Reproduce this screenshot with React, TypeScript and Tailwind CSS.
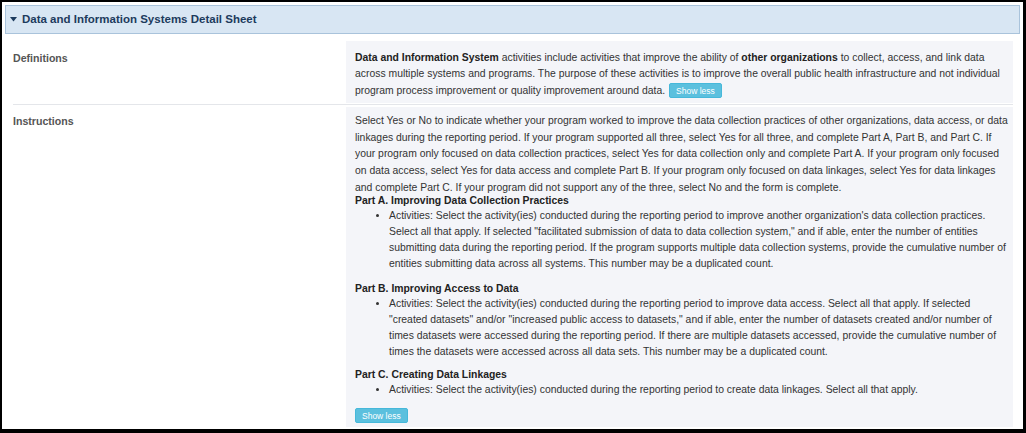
const Caret = () => (
  <svg width="7" height="5" viewBox="0 0 7 5" className="mr-[5px] shrink-0">
    <path d="M0 0 L7 0 L3.5 4.5 Z" fill="#1d3b5d" />
  </svg>
);

const ShowLess = ({ className = '' }: { className?: string }) => (
  <button
    className={`inline-flex h-[15px] items-center rounded-[2px] border border-[#46b8da] bg-[#5bc0de] px-[6px] text-[8.5px] leading-none tracking-normal text-white ${className}`}
  >
    Show less
  </button>
);

const Heading = ({ children, className = '' }: { children: React.ReactNode; className?: string }) => (
  <div className={`font-bold leading-[14px] text-[#222] ${className}`}>{children}</div>
);

// keeps the same line breaks as the original sheet
const Lines = ({ lines }: { lines: string[] }) => (
  <>
    {lines.map((line, i) => (
      <span key={i}>
        {line}
        {i < lines.length - 1 && <br />}
      </span>
    ))}
  </>
);

const Bullets = ({ lines }: { lines: string[] }) => (
  <ul className="list-disc whitespace-nowrap pl-[34px] leading-[16px]">
    <li>
      <Lines lines={lines} />
    </li>
  </ul>
);

const intro = [
  'Select Yes or No to indicate whether your program worked to improve the data collection practices of other organizations, data access, or data',
  'linkages during the reporting period. If your program supported all three, select Yes for all three, and complete Part A, Part B, and Part C. If',
  'your program only focused on data collection practices, select Yes for data collection only and complete Part A. If your program only focused',
  'on data access, select Yes for data access and complete Part B. If your program only focused on data linkages, select Yes for data linkages',
  'and complete Part C. If your program did not support any of the three, select No and the form is complete.',
];

const partA = [
  "Activities: Select the activity(ies) conducted during the reporting period to improve another organization's data collection practices.",
  'Select all that apply. If selected "facilitated submission of data to data collection system," and if able, enter the number of entities',
  'submitting data during the reporting period. If the program supports multiple data collection systems, provide the cumulative number of',
  'entities submitting data across all systems. This number may be a duplicated count.',
];

const partB = [
  'Activities: Select the activity(ies) conducted during the reporting period to improve data access. Select all that apply. If selected',
  '"created datasets" and/or "increased public access to datasets," and if able, enter the number of datasets created and/or number of',
  'times datasets were accessed during the reporting period. If there are multiple datasets accessed, provide the cumulative number of',
  'times the datasets were accessed across all data sets. This number may be a duplicated count.',
];

const partC = ['Activities: Select the activity(ies) conducted during the reporting period to create data linkages. Select all that apply.'];

export default function App() {
  return (
    <div className="h-[433px] w-[1026px] border-b-4 border-l-2 border-r-[3px] border-t-2 border-black bg-white p-[3px] font-['Liberation_Sans',Arial,sans-serif] text-[10.4px] text-[#333]">
      <div className="flex h-[29px] items-center border border-[#a9c3db] bg-[#d8e6f3] pl-[4px]">
        <Caret />
        <span className="text-[11.5px] font-bold text-[#1d3b5d]">Data and Information Systems Detail Sheet</span>
      </div>

      <div className="ml-[8px] mr-[7px]">
        {/* definitions */}
        <div className="flex border-b border-[#e4e6ea] pb-[1px] pt-[7px]">
          <div className="w-[333px] shrink-0 pt-[9px] text-[10.6px] font-bold leading-[16px] text-[#555]">Definitions</div>
          <div className="min-w-0 flex-1 overflow-hidden whitespace-nowrap bg-[#f4f5f9] px-[9px] pb-[4px] pt-[9px] leading-[16.3px]">
            <b className="text-[#222]">Data and Information System</b> activities include activities that improve the
            ability of <b className="text-[#222]">other organizations</b> to collect, access, and link data
            <br />
            across multiple systems and programs. The purpose of these activities is to improve the overall public health
            infrastructure and not individual
            <br />
            program process improvement or quality improvement around data. <ShowLess className="ml-[1px] align-middle" />
          </div>
        </div>

        {/* instructions */}
        <div className="flex pt-[2px]">
          <div className="w-[333px] shrink-0 pt-[6px] text-[10.6px] font-bold leading-[16.7px] text-[#555]">Instructions</div>
          <div className="h-[320px] min-w-0 flex-1 overflow-hidden bg-[#f4f5f9] px-[9px] pt-[6px]">
            <p className="whitespace-nowrap leading-[16.7px]">
              <Lines lines={intro} />
            </p>
            <Heading className="-mt-[2px]">Part A. Improving Data Collection Practices</Heading>
            <Bullets lines={partA} />
            <Heading className="mt-[10px]">Part B. Improving Access to Data</Heading>
            <Bullets lines={partB} />
            <Heading className="mt-[8px]">Part C. Creating Data Linkages</Heading>
            <Bullets lines={partC} />
            <ShowLess className="mt-[10px]" />
          </div>
        </div>
      </div>
    </div>
  );
}
